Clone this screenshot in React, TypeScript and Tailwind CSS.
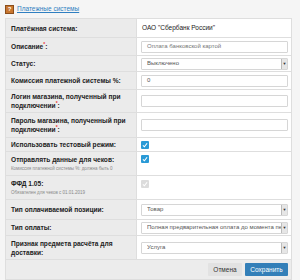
import React from "react";

const Star = () => <span className="text-[#e33] text-[5px] relative -top-[3px]">*</span>;

const Row = ({
  label,
  children,
  h,
  note,
}: {
  label: React.ReactNode;
  children?: React.ReactNode;
  h: string;
  note?: string;
}) => (
  <div className={`flex border-b border-[#dedede] ${h}`}>
    <div className="w-[131px] shrink-0 bg-[#ebebeb] border-r border-[#dedede] px-[5px] flex flex-col justify-center">
      <div className="font-bold text-[6.6px] leading-[9px] text-[#222] whitespace-nowrap">{label}</div>
      {note && <div className="text-[4.5px] leading-[7px] text-[#888] mt-[1px] whitespace-nowrap">{note}</div>}
    </div>
    <div className="flex-1 min-w-0 bg-white pl-[4px] pr-[3px] flex items-center">{children}</div>
  </div>
);

const Input = ({ value, placeholder }: { value?: string; placeholder?: string }) => (
  <div className="w-full h-[12px] border border-[#d6d6d6] rounded-[1px] bg-white px-[5px] flex items-center text-[6px] text-[#555]">
    {value ?? <span className="text-[#777]">{placeholder}</span>}
  </div>
);

const Select = ({ value }: { value: string }) => (
  <div className="w-full min-w-0 h-[12px] border border-[#d6d6d6] rounded-[1px] bg-white pl-[5px] flex items-center text-[6px] text-[#555] overflow-hidden">
    <span className="flex-1 min-w-0 whitespace-nowrap overflow-hidden">{value}</span>
    <span className="w-[6px] shrink-0 h-[10px] bg-[#e6e6e6] border-l border-[#bbb] flex items-center justify-center text-[4px] text-[#333]">▼</span>
  </div>
);

const Check = ({ disabled }: { disabled?: boolean }) => (
  <div
    className={`w-[8px] h-[8px] rounded-[1px] flex items-center justify-center ${
      disabled ? "bg-[#dcdcdc]" : "bg-[#2a9ad6]"
    }`}
  >
    <svg width="6" height="6" viewBox="0 0 10 10">
      <path d="M1.5 5.5 L4 8 L8.5 2" stroke="white" strokeWidth="1.8" fill="none" />
    </svg>
  </div>
);

export default function App() {
  return (
    <div
      className="w-[300px] h-[280px] bg-[#f5f5f5] overflow-hidden"
      style={{ fontFamily: '"Liberation Sans", Arial, sans-serif' }}
    >
      <div className="h-[18px] flex items-center pl-[5px] gap-[3px]">
        <div className="w-[9px] h-[9px] bg-[#c8762f] border border-[#8a4e1c] flex items-center justify-center text-white text-[6px] font-bold leading-none">
          ?
        </div>
        <a className="text-[6.5px] text-[#2f7fc1] underline">Платежные системы</a>
      </div>
      <div className="ml-[5px] w-[287px] border-t border-l border-r border-[#dedede]">
        <Row label="Платёжная система:" h="h-[19px]">
          <span className="text-[6.5px] text-[#222] pl-[1px]">ОАО "Сбербанк России"</span>
        </Row>
        <Row
          label={
            <>
              Описание<Star />:
            </>
          }
          h="h-[18px]"
        >
          <Input placeholder="Оплата банковской картой" />
        </Row>
        <Row label="Статус:" h="h-[16px]">
          <Select value="Выключено" />
        </Row>
        <Row label="Комиссия платежной системы %:" h="h-[18px]">
          <Input value="0" />
        </Row>
        <Row
          label={
            <>
              Логин магазина, полученный при
              <br />
              подключении<Star />:
            </>
          }
          h="h-[23px]"
        >
          <Input value="" />
        </Row>
        <Row
          label={
            <>
              Пароль магазина, полученный при
              <br />
              подключении<Star />:
            </>
          }
          h="h-[25px]"
        >
          <Input value="" />
        </Row>
        <Row label="Использовать тестовый режим:" h="h-[14px]">
          <Check />
        </Row>
        <Row
          label="Отправлять данные для чеков:"
          note="Комиссия платежной системы %: должна быть 0"
          h="h-[24px]"
        >
          <div className="self-start mt-[3px]">
            <Check />
          </div>
        </Row>
        <Row label="ФФД 1.05:" note="Обязателен для чеков с 01.01.2019" h="h-[24px]">
          <div className="self-start mt-[4px]">
            <Check disabled />
          </div>
        </Row>
        <Row label="Тип оплачиваемой позиции:" h="h-[20px]">
          <Select value="Товар" />
        </Row>
        <Row label="Тип оплаты:" h="h-[16px]">
          <Select value="Полная предварительная оплата до момента передачи предмета расчёта" />
        </Row>
        <Row
          label={
            <>
              Признак предмета расчёта для
              <br />
              доставки:
            </>
          }
          h="h-[24px]"
        >
          <Select value="Услуга" />
        </Row>
        <div className="h-[20px] bg-[#ececec] border-b border-[#dedede] flex items-center justify-end pr-[3px] gap-[3px]">
          <div className="h-[13px] w-[34px] bg-[#e2e2e2] rounded-[1px] flex items-center justify-center text-[6.5px] text-[#333]">
            Отмена
          </div>
          <div className="h-[13px] w-[43px] bg-[#337fb8] rounded-[1px] flex items-center justify-center text-[6.5px] text-white">
            Сохранить
          </div>
        </div>
      </div>
    </div>
  );
}
